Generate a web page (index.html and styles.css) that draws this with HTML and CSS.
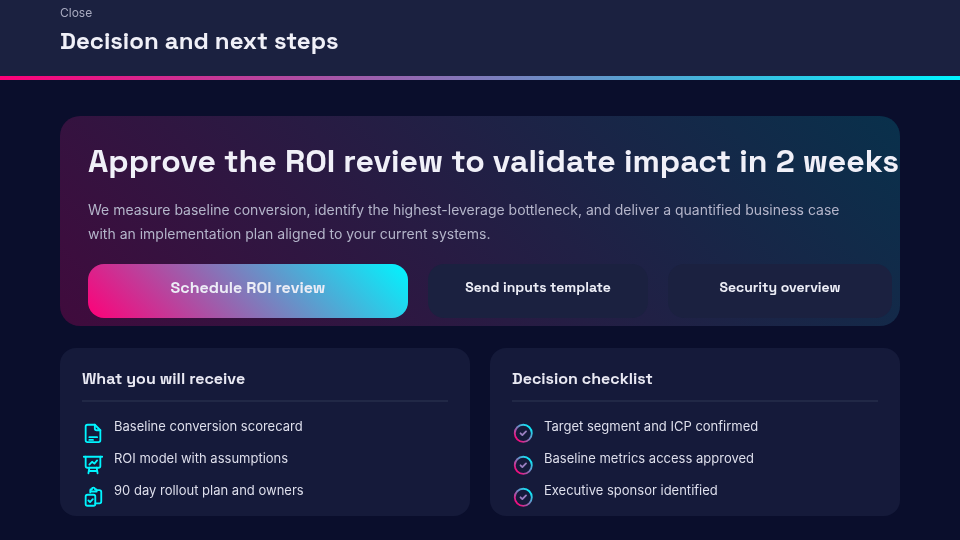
FILE: index.html
```html
<!DOCTYPE html>
<html lang="en">
<head>
<meta charset="utf-8">
<title>Decision and next steps</title>
<link rel="stylesheet" href="styles.css">
</head>
<body>
<svg class="defs" width="0" height="0" aria-hidden="true">
  <defs>
    <linearGradient id="chk" x1="0" y1="1" x2="1" y2="0">
      <stop offset="0.1" stop-color="#ff0078"/>
      <stop offset="0.9" stop-color="#00f5ff"/>
    </linearGradient>
  </defs>
</svg>
<header class="top">
  <div class="eyebrow">Close</div>
  <h1 class="title">Decision and next steps</h1>
</header>
<main class="main">
  <section class="hero">
    <h2 class="hero-title">Approve the ROI review to validate impact in 2 weeks</h2>
    <p class="hero-text">We measure baseline conversion, identify the highest-leverage bottleneck, and deliver a quantified business case with an implementation plan aligned to your current systems.</p>
    <div class="actions">
      <div class="btn btn-primary">Schedule ROI review</div>
      <div class="btn btn-second">Send inputs template</div>
      <div class="btn btn-third">Security overview</div>
    </div>
  </section>
  <section class="cards">
    <article class="card">
      <h3 class="card-title">What you will receive</h3>
      <ul class="list">
        <li class="item">
          <svg class="icon" viewBox="0 0 24 24" fill="none" stroke="#00f5ff" stroke-width="2" stroke-linecap="round" stroke-linejoin="round"><path d="M14 3H6a2 2 0 0 0-2 2v15a2 2 0 0 0 2 2h12a2 2 0 0 0 2-2V9z"/><path d="M14 3v4a2 2 0 0 0 2 2h4"/><path d="M8 16.500h8.500M8 19.500h4"/></svg>
          <span>Baseline conversion scorecard</span>
        </li>
        <li class="item">
          <svg class="icon" viewBox="0 0 24 24" fill="none" stroke="#00f5ff" stroke-width="2" stroke-linecap="round" stroke-linejoin="round"><path d="M2 3h20"/><path d="M4 3v10a2 2 0 0 0 2 2h12a2 2 0 0 0 2-2V3"/><path d="M8 11.500l3-3 2.500 2 3-3.500"/><path d="M8 15l-1 6M16 15l1 6M7.500 18.500h9"/></svg>
          <span>ROI model with assumptions</span>
        </li>
        <li class="item">
          <svg class="icon" viewBox="0 0 24 24" fill="none" stroke="#00f5ff" stroke-width="2" stroke-linecap="round" stroke-linejoin="round"><path d="M9 7V4.500a1 1 0 0 1 1-1h.8a1.700 1.700 0 0 1 3.400 0h.8a1 1 0 0 1 1 1V6h-6"/><path d="M16 4.500h3a2 2 0 0 1 2 2V17a2 2 0 0 1-2 2h-4.500"/><rect x="4" y="9.500" width="10.500" height="12" rx="2"/><path d="M7 15.800l1.800 1.800 3-3.200"/></svg>
          <span>90 day rollout plan and owners</span>
        </li>
      </ul>
    </article>
    <article class="card">
      <h3 class="card-title">Decision checklist</h3>
      <ul class="list">
        <li class="item">
          <svg class="icon" viewBox="0 0 24 24" fill="none" stroke="url(#chk)" stroke-width="2" stroke-linecap="round" stroke-linejoin="round"><circle cx="12.300" cy="12.300" r="9.300"/><path d="M9.300 12.300l2 2 4-4" stroke="#9a7fc0"/></svg>
          <span>Target segment and ICP confirmed</span>
        </li>
        <li class="item">
          <svg class="icon" viewBox="0 0 24 24" fill="none" stroke="url(#chk)" stroke-width="2" stroke-linecap="round" stroke-linejoin="round"><circle cx="12.300" cy="12.300" r="9.300"/><path d="M9.300 12.300l2 2 4-4" stroke="#9a7fc0"/></svg>
          <span>Baseline metrics access approved</span>
        </li>
        <li class="item">
          <svg class="icon" viewBox="0 0 24 24" fill="none" stroke="url(#chk)" stroke-width="2" stroke-linecap="round" stroke-linejoin="round"><circle cx="12.300" cy="12.300" r="9.300"/><path d="M9.300 12.300l2 2 4-4" stroke="#9a7fc0"/></svg>
          <span>Executive sponsor identified</span>
        </li>
      </ul>
    </article>
  </section>
</main>
</body>
</html>
```
FILE: styles.css
```css
* { box-sizing: border-box; }
html, body { margin: 0; padding: 0; }
body {
  width: 960px;
  height: 540px;
  overflow: hidden;
  background: #0a0e2c;
  font-family: "Inter", "Liberation Sans", sans-serif;
  font-variant-ligatures: none;
  color: #e8e8f2;
  will-change: transform;
}
.defs { display: block; height: 0; }
.top {
  height: 80px;
  padding: 5px 60px 0;
  background: #1b2140;
  border-bottom: 4px solid;
  border-image: linear-gradient(90deg, #ff0078, #00f5ff) 1;
}
.eyebrow { font-size: 12px; line-height: 16px; color: #a9abc0; }
.title {
  margin: 5px 0 0;
  font-family: "Space Grotesk", "Inter", sans-serif;
  font-size: 24px;
  line-height: 30px;
  font-weight: 700;
  color: #f0f0f8;
}
.main { padding: 36px 60px 0; }
.hero {
  height: 210px;
  padding: 24px 28px 0;
  border-radius: 20px;
  background: linear-gradient(45deg, rgba(255,0,120,.22), rgba(0,245,255,.15)), #0a0e2c;
  overflow: hidden;
}
.hero-title {
  margin: 0;
  font-family: "Space Grotesk", "Inter", sans-serif;
  font-size: 32px;
  line-height: 42px;
  font-weight: 700;
  white-space: nowrap;
  color: #f0f0f8;
}
.hero-text {
  margin: 16px 0 0;
  font-size: 14px;
  line-height: 24px;
  color: #b4b5ca;
  width: 770px;
}
.actions { display: flex; gap: 20px; margin-top: 18px; width: 804px; }
.btn {
  height: 54px;
  padding-top: 14px;
  border-radius: 16px;
  text-align: center;
  font-family: "Space Grotesk", "Inter", sans-serif;
  font-weight: 700;
  font-size: 14px;
  line-height: 18px;
  color: #ecedf6;
  background: #1b2140;
}
.btn-primary {
  width: 320px;
  font-size: 16px;
  line-height: 20px;
  background: linear-gradient(45deg, #ff0078, #00f5ff);
}
.btn-second { width: 220px; }
.btn-third { width: 224px; }
.cards { display: flex; gap: 20px; margin-top: 22px; }
.card {
  width: 410px;
  height: 168px;
  padding: 21px 22px 0;
  border-radius: 16px;
  background: #151a3a;
  overflow: hidden;
}
.card-title {
  margin: 0;
  padding-bottom: 11px;
  border-bottom: 2px solid #212846;
  font-family: "Space Grotesk", "Inter", sans-serif;
  font-size: 16px;
  line-height: 20px;
  font-weight: 700;
  color: #e8e8f2;
}
.list { list-style: none; margin: 14px 0 0; padding: 0; }
.item {
  display: flex;
  gap: 10px;
  height: 32px;
  font-size: 13px;
  line-height: 20px;
  color: #dedfec;
}
.icon { flex: none; width: 22px; height: 22px; margin-top: 6px; }
```
